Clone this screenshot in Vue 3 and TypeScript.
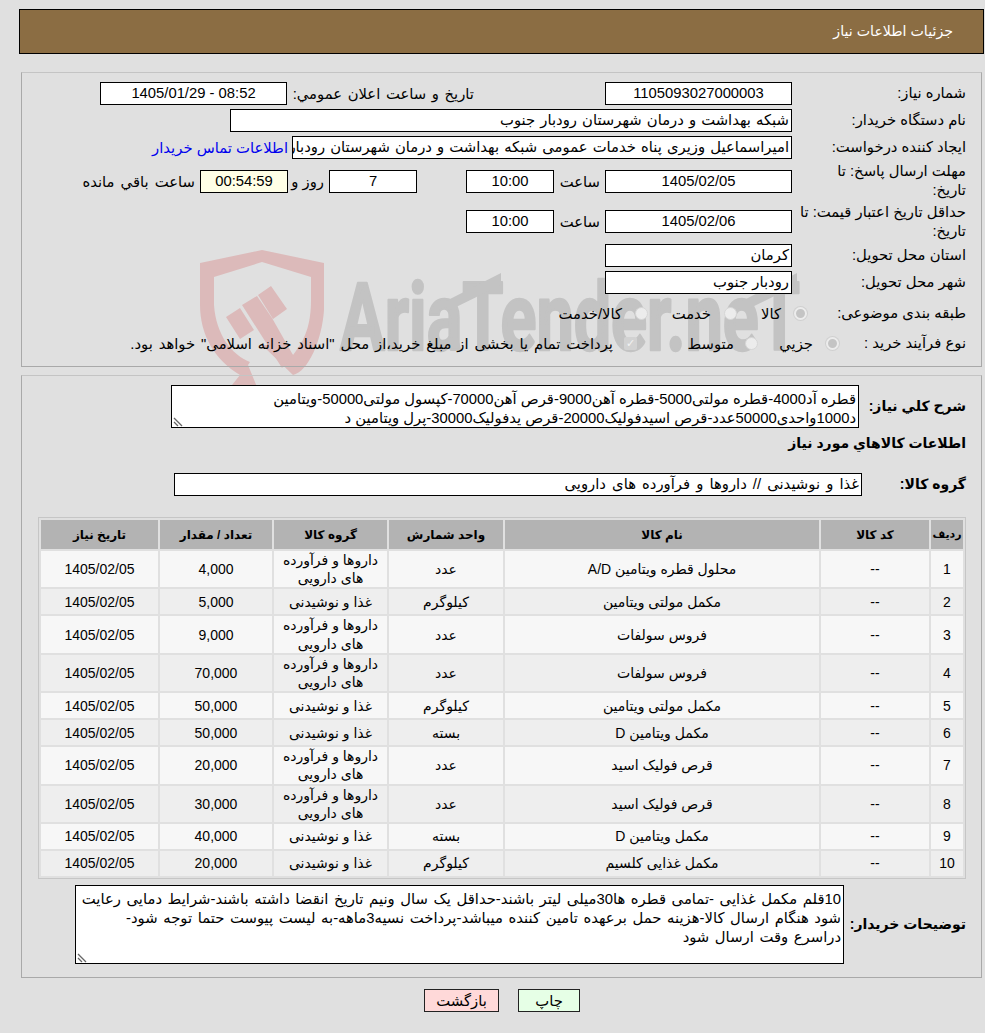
<script setup lang="ts">
interface Item { id: number; name: string; group: string; unit: string; qty: string }
const drug = 'داروها و فرآورده\nهای دارویی'
const food = 'غذا و نوشیدنی'
const items: Item[] = [
  { id: 1, name: 'محلول قطره ویتامین A/D', group: drug, unit: 'عدد', qty: '4,000' },
  { id: 2, name: 'مکمل مولتی ویتامین', group: food, unit: 'کیلوگرم', qty: '5,000' },
  { id: 3, name: 'فروس سولفات', group: drug, unit: 'عدد', qty: '9,000' },
  { id: 4, name: 'فروس سولفات', group: drug, unit: 'عدد', qty: '70,000' },
  { id: 5, name: 'مکمل مولتی ویتامین', group: food, unit: 'کیلوگرم', qty: '50,000' },
  { id: 6, name: 'مکمل ویتامین D', group: food, unit: 'بسته', qty: '50,000' },
  { id: 7, name: 'قرص فولیک اسید', group: drug, unit: 'عدد', qty: '20,000' },
  { id: 8, name: 'قرص فولیک اسید', group: drug, unit: 'عدد', qty: '30,000' },
  { id: 9, name: 'مکمل ویتامین D', group: food, unit: 'بسته', qty: '40,000' },
  { id: 10, name: 'مکمل غذایی کلسیم', group: food, unit: 'کیلوگرم', qty: '20,000' },
]
const summary = 'قطره آد4000-قطره مولتی5000-قطره آهن9000-قرص آهن70000-کپسول مولتی50000-ویتامین\nد1000واحدی50000عدد-قرص اسیدفولیک20000-قرص یدفولیک30000-پرل ویتامین د'
const notes = '10قلم مکمل غذایی -تمامی قطره ها30میلی لیتر باشند-حداقل یک سال ونیم تاریخ انقضا داشته باشند-شرایط دمایی رعایت\nشود هنگام ارسال کالا-هزینه حمل برعهده تامین کننده میباشد-پرداخت نسیه3ماهه-به لیست پیوست حتما توجه شود-\nدراسرع وقت ارسال شود'
</script>

<template>
  <div class="page" dir="rtl">
    <svg class="watermark" width="985" height="440" viewBox="0 0 985 440" aria-hidden="true">
      <path class="shield" d="M200 263 L262 250 L324 263 L324 310 C322 340 308 372 293 375 L262 345 L276 345 L293 355 C305 340 311 325 311 300 L311 277 L262 262 L214 277 L214 305 C216 335 232 355 250 362 L248 365 L257 387 L232 385 L240 375 C215 360 200 335 200 305 Z" />
      <path class="shield" d="M226 317 L240 308 L254 330 L240 339 Z M242 305 L257 296 L272 318 L293 355 L282 368 L258 330 Z M258 295 L271 286 L287 309 L273 319 Z" />
      <text class="mark" x="340" y="350" textLength="460" lengthAdjust="spacingAndGlyphs" dir="ltr">AriaTender.neT</text>
      <path class="mark-bar" d="M450 299 L501 273 L501 285 L450 310 Z M746 299 L797 273 L797 285 L746 310 Z" />
    </svg>

    <div class="content">
      <header class="title-bar">جزئیات اطلاعات نیاز</header>

      <section class="panel panel-top">
        <div class="row h27">
          <label class="lbl">شماره نیاز:</label>
          <div class="box center w187">1105093027000003</div>
          <span class="txt announce">تاريخ و ساعت اعلان عمومي:</span>
          <div class="box center w187" dir="ltr">1405/01/29 - 08:52</div>
        </div>
        <div class="row h27">
          <label class="lbl">نام دستگاه خریدار:</label>
          <div class="box w562 wide">شبکه بهداشت و درمان شهرستان رودبار جنوب</div>
        </div>
        <div class="row h27">
          <label class="lbl">ایجاد کننده درخواست:</label>
          <div class="box w500 wide">امیراسماعیل وزیری پناه خدمات عمومی شبکه بهداشت و درمان شهرستان رودبار جنوب</div>
          <a class="contact" href="#">اطلاعات تماس خریدار</a>
        </div>
        <div class="row h40">
          <label class="lbl">مهلت ارسال پاسخ: تا<br />تاریخ:</label>
          <div class="box center w187">1405/02/05</div>
          <span class="txt hour">ساعت</span>
          <div class="box center w88">10:00</div>
          <div class="box center w88 days">7</div>
          <span class="txt dayword">روز و</span>
          <div class="box center w88 timer">00:54:59</div>
          <span class="txt remain">ساعت باقي مانده</span>
        </div>
        <div class="row h41">
          <label class="lbl">حداقل تاریخ اعتبار قیمت: تا<br />تاریخ:</label>
          <div class="box center w187">1405/02/06</div>
          <span class="txt hour">ساعت</span>
          <div class="box center w88">10:00</div>
        </div>
        <div class="row h27">
          <label class="lbl">استان محل تحویل:</label>
          <div class="box w187">کرمان</div>
        </div>
        <div class="row h27">
          <label class="lbl">شهر محل تحویل:</label>
          <div class="box w187">رودبار جنوب</div>
        </div>
        <div class="row h34">
          <label class="lbl l-subject">طبقه بندی موضوعی:</label>
          <div class="choice w70"><span class="radio on"></span><span class="opt">کالا</span></div>
          <div class="choice w89"><span class="radio"></span><span class="opt">خدمت</span></div>
          <div class="choice"><span class="radio"></span><span class="opt">کالا/خدمت</span></div>
        </div>
        <div class="row h26">
          <label class="lbl l-process">نوع فرآیند خرید :</label>
          <div class="choice w81"><span class="radio on"></span><span class="opt">جزيي</span></div>
          <div class="choice w121"><span class="radio"></span><span class="opt gap11">متوسط</span></div>
          <div class="choice"><span class="check">✓</span><span class="opt gap11 treasury">پرداخت تمام یا بخشی از مبلغ خرید،از محل "اسناد خزانه اسلامی" خواهد بود.</span></div>
        </div>
      </section>

      <section class="panel panel-bottom">
        <div class="row r-summary">
          <label class="lbl strong l-summary">شرح كلي نياز:</label>
          <div class="area-wrap">
            <textarea class="area a-summary" readonly :value="summary"></textarea>
            <svg class="grip" width="10" height="10" viewBox="0 0 10 10" aria-hidden="true"><path d="M1 1 L9 9 M1 5 L5 9" /></svg>
          </div>
        </div>
        <div class="heading">اطلاعات كالاهاي مورد نياز</div>
        <div class="row r-group">
          <label class="lbl strong l-group">گروه کالا:</label>
          <div class="box w688 wider">غذا و نوشیدنی // داروها و فرآورده های دارویی</div>
        </div>

        <table class="grid">
          <thead>
            <tr>
              <th class="c1">ردیف</th>
              <th class="c2">کد کالا</th>
              <th class="c3">نام کالا</th>
              <th class="c4">واحد شمارش</th>
              <th class="c5">گروه کالا</th>
              <th class="c6">تعداد / مقدار</th>
              <th class="c7">تاریخ نیاز</th>
            </tr>
          </thead>
          <tbody>
            <tr v-for="item in items" :key="item.id">
              <td>{{ item.id }}</td>
              <td>--</td>
              <td>{{ item.name }}</td>
              <td>{{ item.unit }}</td>
              <td class="wrap">{{ item.group }}</td>
              <td>{{ item.qty }}</td>
              <td>1405/02/05</td>
            </tr>
          </tbody>
        </table>

        <div class="row r-notes">
          <label class="lbl strong l-notes">توضیحات خریدار:</label>
          <div class="area-wrap">
            <textarea class="area a-notes" readonly :value="notes"></textarea>
            <svg class="grip" width="10" height="10" viewBox="0 0 10 10" aria-hidden="true"><path d="M1 1 L9 9 M1 5 L5 9" /></svg>
          </div>
        </div>
      </section>

      <div class="actions">
        <button class="btn print" type="button">چاپ</button>
        <button class="btn back" type="button">بازگشت</button>
      </div>
    </div>
  </div>
</template>

<style>
html, body { margin: 0; background: #e0e0e0; overflow: hidden; }
</style>

<style scoped>
.page {
  position: relative;
  width: 985px;
  height: 1033px;
  overflow: hidden;
  background: #e0e0e0;
  color: #000;
  font-family: "Liberation Sans", "DejaVu Sans", sans-serif;
  font-size: 14.8px;
}
.watermark { position: absolute; left: 0; top: 0; direction: ltr; }
.shield { fill: #dcbaba; }
.mark {
  font-family: Roboto, sans-serif;
  font-weight: 700;
  font-size: 94px;
  fill: #c3c3c3;
  stroke: #c3c3c3;
  stroke-width: 2.5px;
  stroke-linejoin: round;
}
.mark-bar { fill: #c3c3c3; }
.content { position: relative; padding-top: 9px; }
.title-bar {
  box-sizing: border-box;
  height: 45px;
  margin-left: 19px;
  margin-right: 1px;
  padding-right: 30px;
  border: 1px solid #000;
  background: #8b6d43;
  color: #fff;
  font-size: 14.2px;
  line-height: 43px;
}
.panel {
  box-sizing: border-box;
  margin-left: 21px;
  margin-right: 3px;
  border: 1px solid #a9a9a9;
  border-top-color: #c4c4c4;
  padding-right: 15px;
}
.panel-top { margin-top: 18px; height: 295px; padding-top: 7px; }
.panel-bottom { margin-top: 8px; height: 603px; padding-top: 9px; }
.row { display: flex; align-items: center; }
.h26 { height: 26px; }
.h27 { height: 27px; }
.h34 { height: 34px; }
.h40 { height: 40px; }
.h41 { height: 41px; }
.lbl { flex: none; width: 174px; line-height: 19px; white-space: nowrap; }
.l-subject { width: 159px; }
.l-process { width: 127px; }
.strong { font-weight: 700; font-size: 14px; }
.box {
  box-sizing: border-box;
  flex: none;
  height: 23px;
  padding: 0 2px;
  border: 1px solid #000;
  background: #fff;
  line-height: 21px;
  white-space: nowrap;
  overflow: hidden;
}
.wide { word-spacing: 1px; }
.wider { word-spacing: 2px; }
.center { text-align: center; }
.w187 { width: 187px; }
.w88 { width: 88px; }
.w562 { width: 562px; }
.w500 { width: 500px; }
.w688 { width: 688px; }
.txt { flex: none; white-space: nowrap; }
.announce { margin-right: 131px; margin-left: 4px; width: 183px; word-spacing: 1.5px; }
.contact { margin-right: 4px; color: #0000ee; text-decoration: none; white-space: nowrap; }
.hour { width: 42px; margin: 0 5px 0 4px; }
.days { margin-right: 49px; }
.dayword { width: 30px; margin: 0 5px 0 6px; }
.timer { background: #ffffe6; }
.remain { margin-right: 5px; word-spacing: 2px; }
.choice { display: flex; flex: none; align-items: center; }
.w70 { width: 70px; }
.w81 { width: 81px; }
.w89 { width: 89px; }
.w121 { width: 121px; }
.radio {
  box-sizing: border-box;
  flex: none;
  width: 13px;
  height: 13px;
  border-radius: 50%;
  border: 1px solid #d6d6d6;
  background: #ececec;
}
.radio.on { border: 2px solid #ececec; background: #c4c4c4; box-shadow: 0 0 0 1px #d0d0d0; }
.opt { margin-right: 13px; white-space: nowrap; }
.gap11 { margin-right: 11px; }
.treasury { word-spacing: 1.8px; }
.check {
  flex: none;
  width: 13px;
  height: 13px;
  border-radius: 2px;
  background: #d2d2d2;
  color: #f2f2f2;
  font-size: 11px;
  line-height: 13px;
  text-align: center;
}
.area-wrap { position: relative; flex: none; line-height: 0; }
.area {
  box-sizing: border-box;
  display: block;
  margin: 0;
  padding: 4px 2px 0 2px;
  border: 1px solid #000;
  border-radius: 0;
  outline: none;
  background: #fff;
  color: #000;
  font: inherit;
  line-height: 19px;
  overflow: hidden;
  resize: none;
  white-space: pre;
}
.grip { position: absolute; left: 2px; bottom: 1px; }
.grip path { fill: none; stroke: #666; stroke-width: 1.3px; }
.r-summary { height: 43px; }
.l-summary { width: 107px; }
.a-summary { width: 688px; height: 43px; }
.heading { margin-top: 5px; height: 20px; line-height: 20px; font-weight: 700; font-size: 14px; }
.r-group { margin-top: 20px; height: 23px; }
.l-group { width: 104px; }
.grid {
  box-sizing: border-box;
  direction: rtl;
  margin: 21px 0 0 0;
  width: 928px;
  border: 1px solid #c6c6c6;
  border-spacing: 2px;
  table-layout: fixed;
  text-align: center;
  font-size: 14px;
}
.grid th {
  height: 29px;
  padding: 0;
  background: #b3b3b3;
  font-weight: 700;
  font-size: 12px;
}
.grid th.c1 { font-size: 11px; }
.grid td { height: 25px; padding: 0 4px; line-height: 18.2px; }
.grid td.wrap { padding: 0 2px; white-space: pre-line; }
.grid tbody tr:nth-child(odd) td { background: #f7f7f7; }
.grid tbody tr:nth-child(even) td { background: #eeeeee; }
.c1 { width: 32px; }
.c2 { width: 108px; }
.c3 { width: 314px; }
.c4 { width: 114px; }
.c5 { width: 113px; }
.c6 { width: 112px; }
.c7 { width: 117px; }
.r-notes { margin-top: 6px; height: 79px; }
.l-notes { width: 122px; }
.a-notes { width: 769px; height: 79px; word-spacing: 1.5px; }
.actions { display: flex; justify-content: center; gap: 19px; margin-top: 11px; padding-left: 19px; }
.btn {
  box-sizing: border-box;
  height: 23px;
  border: 1px solid #222;
  padding: 0;
  color: #000;
  font: inherit;
}
.back { width: 75px; background: #ffd9d9; }
.print { width: 62px; background: #e6ffe6; }
</style>
